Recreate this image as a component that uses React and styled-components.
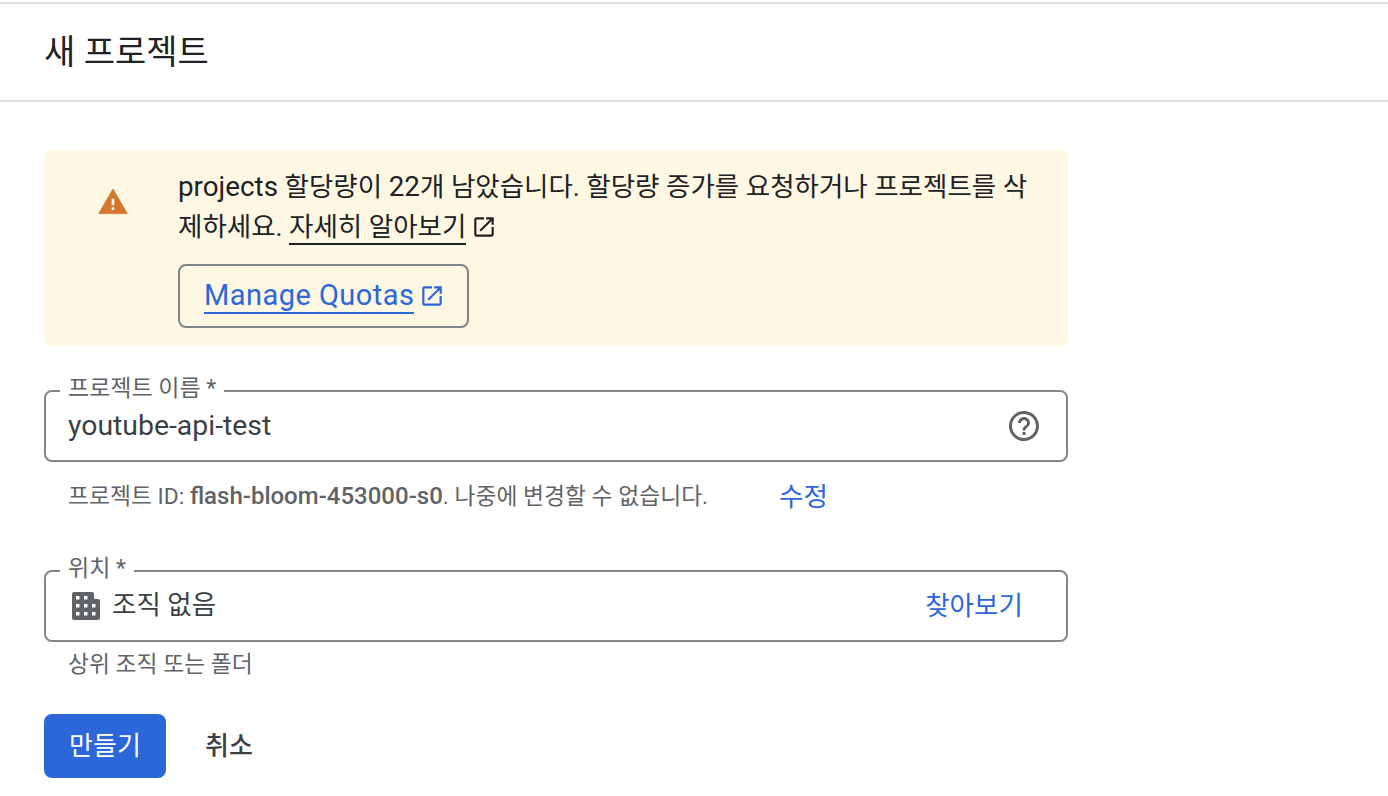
import React from 'react';
import styled, { createGlobalStyle } from 'styled-components';

const GlobalStyle = createGlobalStyle`
  html, body {
    margin: 0;
    padding: 0;
    height: 100%;
    background: #fff;
    overflow: hidden;
    font-family: Roboto, "Noto Sans CJK KR", sans-serif;
    color: #202124;
  }
`;

const Page = styled.div`
  width: 1388px;
  height: 796px;
  padding-top: 2px;
  box-sizing: border-box;
`;

const Header = styled.header`
  height: 90px;
  display: flex;
  align-items: center;
  padding: 0 0 6px 44px;
  border-top: 2px solid #dfdfe5;
  border-bottom: 2px solid #dfdfe5;
`;

const Title = styled.h1`
  margin: 0;
  font-size: 34px;
  font-weight: 400;
  color: #202124;
`;

const Content = styled.main`
  width: 1024px;
  margin-left: 44px;
  padding-top: 48px;
`;

const Alert = styled.section`
  height: 196px;
  box-sizing: border-box;
  display: flex;
  background: #fef7e3;
  border-radius: 8px;
`;

const AlertIconWrap = styled.div`
  flex: 0 0 134px;
  display: flex;
  justify-content: center;
  padding: 36px 0 0 4px;
  box-sizing: border-box;
`;

const AlertBody = styled.div`
  flex: 1;
  padding: 17px 24px 0 0;
`;

const AlertText = styled.p`
  margin: 0;
  font-size: 26.5px;
  line-height: 40px;
  color: #202124;
`;

const Latin = styled.span`
  font-size: 27.8px;
`;

const DocLink = styled.a`
  color: #202124;
  text-decoration: none;
  border-bottom: 2px solid #202124;
  padding-bottom: 1px;
`;

const LinkIcon = styled.svg`
  width: 26px;
  height: 26px;
  margin-left: ${({ $gap }) => $gap}px;
  vertical-align: -4px;
  fill: currentColor;
  flex: none;
`;

const QuotaButton = styled.a`
  display: inline-flex;
  align-items: center;
  height: 64px;
  box-sizing: border-box;
  margin-top: 17px;
  padding: 0 22px 0 24px;
  border: 2px solid #80868b;
  border-radius: 8px;
  color: #2b67d9;
  font-size: 29px;
  letter-spacing: 0.45px;
`;

const QuotaLabel = styled.span`
  border-bottom: 2px solid #2b67d9;
  line-height: 34px;
`;

const FieldSet = styled.fieldset`
  margin: ${({ $top }) => $top}px 0 0;
  height: 85px;
  min-width: 0;
  box-sizing: border-box;
  display: flex;
  align-items: center;
  gap: 12px;
  padding: 0 ${({ $right }) => $right}px 14px 22px;
  border: 2px solid #80868b;
  border-radius: 8px;
`;

const Legend = styled.legend`
  margin-left: -8px;
  padding: 0 8px 4px;
  font-size: 23px;
  line-height: 24px;
  color: #5f6368;
`;

const FieldValue = styled.span`
  flex: 1;
  margin-bottom: ${({ $lift }) => $lift || 0}px;
  font-size: ${({ $size }) => $size}px;
  color: #3c4043;
`;

const HelpIcon = styled.svg`
  width: 36px;
  height: 36px;
  fill: #5f6368;
  flex: none;
`;

const BuildingIcon = styled.svg`
  width: 28px;
  height: 28px;
  margin-left: 4px;
  fill: #5f6368;
  flex: none;
`;

const TextLink = styled.a`
  margin: ${({ $shift }) => $shift || 0}px 0 0;
  color: #2b67d9;
  font-size: 26.6px;
`;

const Hint = styled.div`
  display: flex;
  align-items: center;
  height: 32px;
  margin: ${({ $top }) => $top}px 0 0 24px;
  font-size: 22.8px;
  line-height: 32px;
  color: #5f6368;
`;

const HintText = styled.span`
  width: 711px;
  b {
    font-weight: 500;
    font-size: 24px;
  }
`;

const Actions = styled.div`
  display: flex;
  align-items: center;
  margin-top: 33px;
`;

const PrimaryButton = styled.button`
  width: 122px;
  height: 64px;
  padding: 0 0 6px;
  border: 0;
  border-radius: 8px;
  background: #2b67d9;
  color: #fff;
  font: 400 26px Roboto, "Noto Sans CJK KR", sans-serif;
`;

const PlainButton = styled.button`
  margin-left: 15px;
  padding: 0 24px 6px;
  height: 64px;
  border: 0;
  background: none;
  color: #3c4043;
  font: 500 26px Roboto, "Noto Sans CJK KR", sans-serif;
`;

const OpenInNew = ({ gap }) => (
  <LinkIcon $gap={gap} viewBox="0 0 24 24">
    <path d="M19 19H5V5h7V3H5a2 2 0 0 0-2 2v14a2 2 0 0 0 2 2h14c1.1 0 2-.9 2-2v-7h-2v7zM14 3v2h3.59l-9.83 9.83 1.41 1.41L19 6.41V10h2V3h-7z" />
  </LinkIcon>
);

export default function App() {
  return (
    <Page>
      <GlobalStyle />
      <Header>
        <Title>새 프로젝트</Title>
      </Header>
      <Content>
        <Alert>
          <AlertIconWrap>
            <svg width="32" height="32" viewBox="0 0 24 24">
              <path fill="#d2772c" stroke="#d2772c" strokeWidth="0.6" strokeLinejoin="round" d="M1.3 20.7h21.4L12 2.3 1.3 20.7z" />
              <path fill="#fef7e3" d="M11 9.5h2v5h-2zM11 16h2v2h-2z" />
            </svg>
          </AlertIconWrap>
          <AlertBody>
            <AlertText>
              <Latin>projects</Latin> 할당량이 <Latin>22</Latin>개 남았습니다. 할당량 증가를 요청하거나 프로젝트를 삭제하세요.{' '}
              <DocLink>자세히 알아보기</DocLink>
              <OpenInNew gap={5} />
            </AlertText>
            <QuotaButton>
              <QuotaLabel>Manage Quotas</QuotaLabel>
              <OpenInNew gap={5} />
            </QuotaButton>
          </AlertBody>
        </Alert>

        <FieldSet $top={31} $right={24}>
          <Legend>프로젝트 이름 *</Legend>
          <FieldValue $size={28.4}>youtube-api-test</FieldValue>
          <HelpIcon viewBox="0 0 24 24">
            <path d="M11 18h2v-2h-2v2zm1-16C6.48 2 2 6.48 2 12s4.48 10 10 10 10-4.48 10-10S17.52 2 12 2zm0 18c-4.41 0-8-3.59-8-8s3.59-8 8-8 8 3.59 8 8-3.59 8-8 8zm0-14c-2.21 0-4 1.79-4 4h2c0-1.1.9-2 2-2s2 .9 2 2c0 2-3 1.75-3 5h2c0-2.25 3-2.5 3-5 0-2.21-1.79-4-4-4z" />
          </HelpIcon>
        </FieldSet>
        <Hint $top={18}>
          <HintText>
            프로젝트 ID: <b>flash-bloom-453000-s0</b>. 나중에 변경할 수 없습니다.
          </HintText>
          <TextLink $shift={1}>수정</TextLink>
        </Hint>

        <FieldSet $top={45} $right={43}>
          <Legend>위치 *</Legend>
          <BuildingIcon viewBox="0 0 28 28">
            <path
              fillRule="evenodd"
              d="M2 0H20a2 2 0 0 1 2 2V7H26a2 2 0 0 1 2 2V26a2 2 0 0 1-2 2H2a2 2 0 0 1-2-2V2a2 2 0 0 1 2-2ZM4 4v3.5h3.5V4ZM12 4v3.5h3.5V4ZM4 12v3.5h3.5V12ZM12 12v3.5h3.5V12ZM20 12v3.5h3.5V12ZM4 20v3.5h3.5V20ZM12 20v3.5h3.5V20ZM20 20v3.5h3.5V20Z"
            />
          </BuildingIcon>
          <FieldValue $size={26.5} $lift={6}>조직 없음</FieldValue>
          <TextLink $shift={-4}>찾아보기</TextLink>
        </FieldSet>
        <Hint $top={7}>
          <HintText>상위 조직 또는 폴더</HintText>
        </Hint>

        <Actions>
          <PrimaryButton>만들기</PrimaryButton>
          <PlainButton>취소</PlainButton>
        </Actions>
      </Content>
    </Page>
  );
}
